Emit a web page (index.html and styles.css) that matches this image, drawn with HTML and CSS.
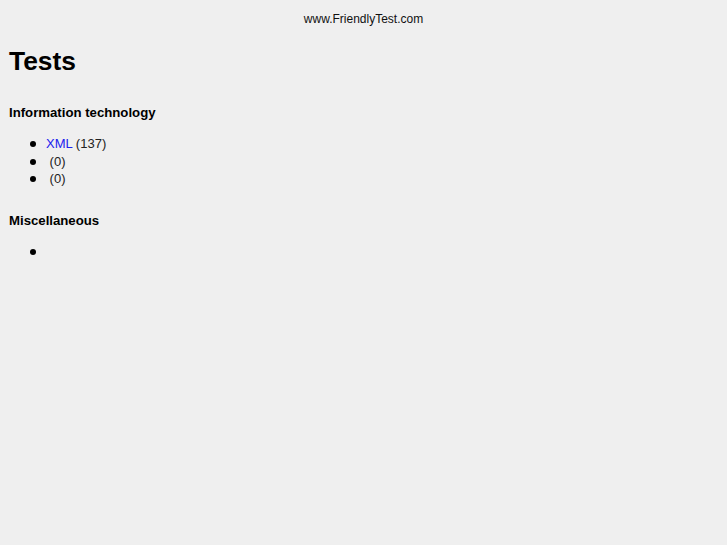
FILE: index.html
```html
<!DOCTYPE html>
<html>
<head>
<meta charset="utf-8">
<title>Tests</title>
<link rel="stylesheet" href="styles.css">
</head>
<body>
<div class="site">www.FriendlyTest.com</div>
<h1 class="title">Tests</h1>
<h3 class="cat">Information technology</h3>
<ul class="list">
<li><a href="#">XML</a> (137)</li>
<li><a href="#"></a> (0)</li>
<li><a href="#"></a> (0)</li>
</ul>
<h3 class="cat cat-next">Miscellaneous</h3>
<ul class="list">
<li></li>
</ul>
</body>
</html>
```
FILE: styles.css
```css
html { background: #efefef; }
body {
  margin: 0;
  padding: 0 9px;
  background: #efefef;
  font-family: "Liberation Sans", Arial, sans-serif;
  color: #222;
}
.site {
  font-size: 12px;
  line-height: 14px;
  text-align: center;
  padding-top: 12px;
  color: #111;
}
.title {
  font-size: 26.4px;
  line-height: 30px;
  font-weight: bold;
  margin: 20px 0 0;
  color: #000;
}
.cat {
  font-size: 13.2px;
  line-height: 15px;
  font-weight: bold;
  margin: 29px 0 0;
  color: #000;
}
.cat-next { margin-top: 25px; }
.list {
  margin: 15px 0 0;
  padding-left: 37px;
  font-size: 13px;
  line-height: 17.5px;
  list-style: none;
}
.list li { min-height: 17.5px; }
.list li::before {
  content: "";
  display: inline-block;
  width: 6px;
  height: 6px;
  border-radius: 50%;
  background: #000;
  margin-left: -16px;
  margin-right: 10px;
  vertical-align: 1px;
}
.list a { color: #2020ee; text-decoration: none; }
```
